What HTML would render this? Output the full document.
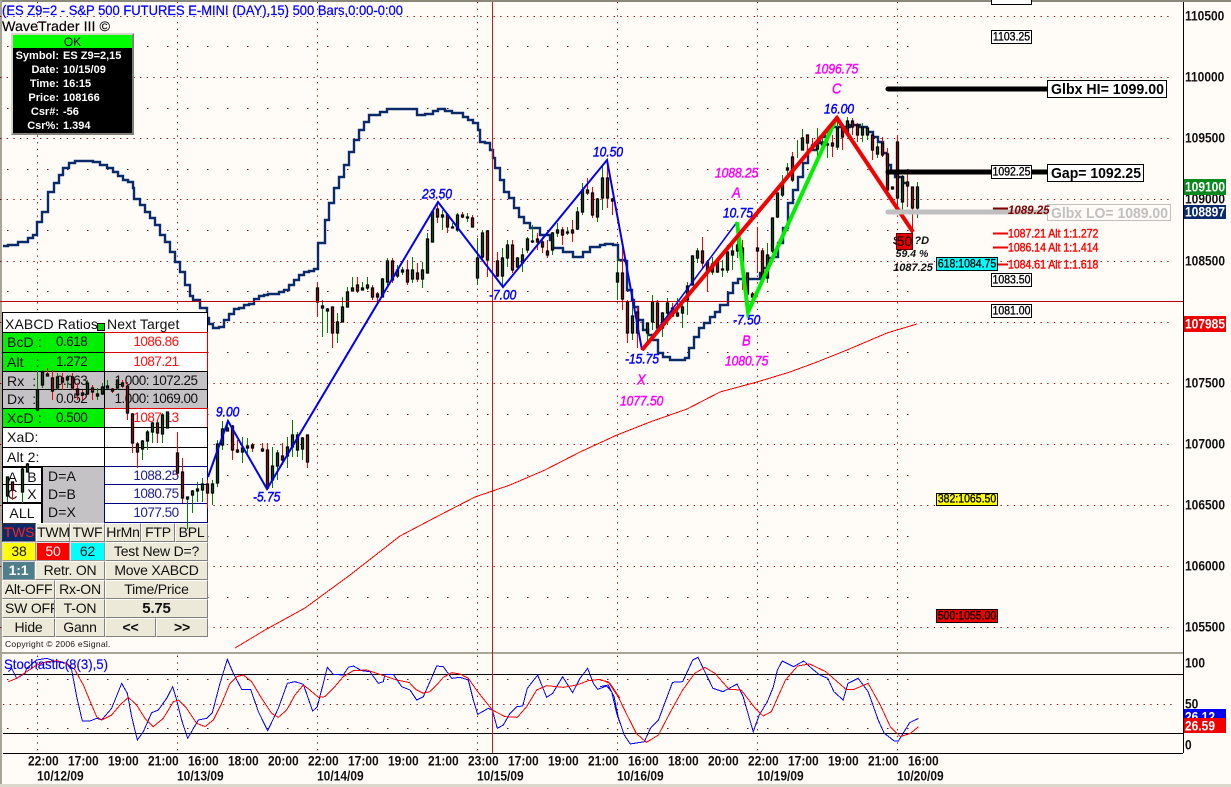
<!DOCTYPE html>
<html><head><meta charset="utf-8"><title>WaveTrader</title>
<style>
html,body{margin:0;padding:0;background:#fffcf8;width:1231px;height:787px;overflow:hidden}
svg{position:absolute;left:0;top:0}
text{font-family:"Liberation Sans",sans-serif}
.ax,.pt,.sm,.rd{transform-box:fill-box;transform-origin:0 100%;transform:scaleY(1.16)}
.ax{font-size:12px;font-weight:bold;fill:#101010}
.w{fill:#fff}
.pt{font-size:12px;font-style:italic;stroke-width:.4;text-anchor:middle}
.bl{fill:#0000ff;stroke:#0000ff}
.mg{fill:#ff00ff;stroke:#ff00ff}
.sm{font-size:10.5px;fill:#000;stroke:#000;stroke-width:.3;text-anchor:middle}
.rd{font-size:10.5px;fill:#ff0000;stroke:#ff0000;stroke-width:.35}
.ct{position:absolute;box-sizing:border-box;font:13.5px/18px "Liberation Sans",sans-serif;letter-spacing:-.5px;color:#101010;white-space:nowrap;overflow:hidden}
.l{letter-spacing:.1px;font-size:14px}
.b{background:#ece9d8;border:1px solid;border-color:#fff #808080 #808080 #fff;text-align:center;height:19px;letter-spacing:-.2px;font-size:14px;line-height:17px}
.ib{position:absolute;left:13px;width:119px;color:#fff;font:bold 11px/14px "Liberation Sans",sans-serif;white-space:nowrap}
.ib b{display:inline-block;width:46px;text-align:right;margin-right:4px}
</style></head><body>

<svg width="1231" height="787" viewBox="0 0 1231 787" style="z-index:1">
<rect x="0" y="0" width="1231" height="2" fill="#8a8878"/>
<rect x="0" y="0" width="2" height="787" fill="#a8a498"/>
<rect x="0" y="784" width="1231" height="3" fill="#dcd8cc"/>
<g fill="none" stroke="#900000" stroke-dasharray="1.3 5.37">
<path d="M0 16.500H1173M0 77.500H1173M0 138.500H1173M0 199.500H1173M0 261.500H1173M0 322.500H1173M0 383.500H1173M0 444.500H1173M0 505.500H1173M0 566.500H1173M0 627.500H1173M3 704.500H1173"/>
<path d="M37.500 2V753M177.500 2V753M317.500 2V753M477.500 2V753M617.500 2V753M757.500 2V753M897.500 2V753"/>
</g>
<path d="M7 46.500H917M7 108.500H917M7 169.500H917M7 230.500H917M7 291.500H917M7 352.500H917M7 414.500H917M7 475.500H917M7 536.500H917M7 597.500H917M7 679.500H917M7 728.500H917" fill="none" stroke="#700000" stroke-dasharray="1.500 18.500"/>

<path fill="none" stroke="#0a2a6a" stroke-width="2.400" d="M3 246H8V245H18V242H28V238H33V235H37V222H42V212H48V192H54V183H59V175H63V168H69V163H75V161H93V162H100V165H107V168H113V172H118V176H123V180H128V182H133V188H134V199H140V205H145V212H150V218H155V225H160V235H165V242H170V252H175V262H180V272H185V285H190V296H193V300H200V308H207V318H209V324H213V328H219V327H224V320H229V314H234V309H239V308H244V305H249V304H254V299H259V296H264V295H268V294H279V292H284V290H289V285H294V280H299V275H304V272H309V271H314V269H318V243H325V220H329V203H334V188H339V177H344V165H349V152H354V140H359V130H364V122H369V115H380V112H387V109H417V115H425V114H433V111H438V109H445V111H452V113H463V117H468V120H473V123H478V130H480V142H485V143H490V150H493V158H495V168H500V180H504V192H509V198H514V208H519V217H524V223H530V228H540V235H550V240H553V248H563V252H573V257H583V252H590V247H600V245H605V244H613V245H618V260H625V261H627V290H632V300H634V307H638V320H643V330H648V335H653V340H658V353H663V357H670V360H685V358H689V348H694V337H699V328H704V323H710V317H715V312H720V305H728V293H733V283H738V279H760V273H763V268H768V258H773V257H778V243H783V228H788V203H793V190H798V177H803V163H808V150H817V143H820V137H825V132H830V127H850V125H860V127H867V132H873V137H878V142H883V153H887V165H891V172H895V177H903V183H908V186"/>

<polyline fill="none" stroke="#ff0000" stroke-width="1" shape-rendering="crispEdges" points="235,648 265,630 305,608 350,575 400,536 440,515 475,497 510,485 545,470 580,452 617,435 650,422 687,409 720,392 757,382 790,372 817,362 847,350 887,333 917,324"/>

<path d="M3 674.500H1183M3 733.500H1183M3 753.500H1183M1183.500 2V753" stroke="#000" fill="none"/>
<rect x="2" y="652" width="1181" height="2" fill="#a8a498"/>

<g transform="translate(0 640) scale(.33333)" fill="none" shape-rendering="crispEdges">
<polyline vector-effect="non-scaling-stroke" stroke="#0000ff" stroke-width="1" points="25,95 35,85 50,115 75,100 80,85 110,60 140,55 170,65 200,70 215,90 230,170 247,243 270,243 290,235 305,240 335,205 365,130 382,160 395,230 412,300 430,275 455,218 475,210 500,175 518,140 530,180 545,240 563,295 595,240 620,235 637,218 660,130 682,58 700,100 725,148 752,148 775,215 803,272 835,205 862,130 885,125 910,133 938,213 952,200 982,82 1000,103 1030,105 1045,82 1060,78 1085,92 1110,95 1135,130 1150,125 1155,103 1180,103 1205,140 1230,150"/>
<polyline vector-effect="non-scaling-stroke" stroke="#ff0000" stroke-width="1" points="25,125 50,115 80,95 110,75 140,65 170,62 200,70 225,90 250,135 275,195 290,230 305,240 335,225 360,195 385,172 410,195 435,235 460,260 490,235 520,185 535,180 560,205 590,250 615,260 640,240 665,190 690,130 710,110 730,105 755,125 785,175 815,220 835,232 860,210 885,165 910,135 930,150 955,172 975,170 1000,145 1030,110 1060,92 1100,90 1130,100 1160,110 1190,120 1230,128"/>
</g>
<g transform="translate(410 650) scale(.33333)" fill="none" shape-rendering="crispEdges">
<polyline vector-effect="non-scaling-stroke" stroke="#0000ff" stroke-width="1" points="0,120 20,150 40,140 60,95 80,48 100,50 125,85 150,82 175,90 190,150 203,193 235,175 247,180 262,235 280,225 300,190 320,170 338,168 352,115 383,75 410,142 428,130 458,80 488,128 510,85 533,55 550,100 563,118 590,108 605,125 620,190 630,220"/>
<polyline vector-effect="non-scaling-stroke" stroke="#ff0000" stroke-width="1" points="0,100 20,120 40,130 60,125 80,105 100,82 125,68 150,72 175,85 203,125 247,180 285,200 322,202 350,170 380,120 410,107 460,112 500,105 535,92 570,88 600,100 630,145"/>
</g>
<g transform="translate(600 640) scale(.40323 .33333)" fill="none" shape-rendering="crispEdges">
<polyline vector-effect="non-scaling-stroke" stroke="#0000ff" stroke-width="1" points="0,140 20,135 35,170 45,230 60,285 75,312 110,305 125,265 145,240 165,175 180,127 205,125 230,60 243,52 260,95 280,145 305,155 340,132 355,170 380,275 395,225 415,185 430,140 440,90 452,63 480,80 505,63 525,85 545,105 565,115 580,155 603,180 615,130 640,115 665,155 690,240 705,280 730,303 740,303 768,248 790,235"/>
<polyline vector-effect="non-scaling-stroke" stroke="#ff0000" stroke-width="1" points="0,120 20,125 45,170 65,220 90,280 115,307 145,285 175,215 205,150 235,100 260,82 285,100 320,148 350,150 385,205 405,228 425,215 460,120 490,78 520,72 560,95 610,148 630,148 665,130 695,195 720,260 745,290 770,280 790,260"/>
</g>

<text x="2" y="15" font-size="14" fill="#0000ff" stroke="#0000ff" stroke-width=".25" textLength="401" lengthAdjust="spacingAndGlyphs">(ES Z9=2 - S&amp;P 500 FUTURES E-MINI (DAY),15) 500 Bars,0:00-0:00</text>
<text x="2" y="31" font-size="14" fill="#000" stroke="#000" stroke-width=".15" textLength="108" lengthAdjust="spacingAndGlyphs">WaveTrader III ©</text>

<text class="ax" x="1185" y="21">110500</text><text class="ax" x="1185" y="82">110000</text><text class="ax" x="1185" y="143">109500</text><text class="ax" x="1185" y="204">109000</text><text class="ax" x="1185" y="266">108500</text><text class="ax" x="1185" y="388">107500</text><text class="ax" x="1185" y="449">107000</text><text class="ax" x="1185" y="510">106500</text><text class="ax" x="1185" y="571">106000</text><text class="ax" x="1185" y="632">105500</text>
<rect x="1184" y="179" width="42" height="16" fill="#0a8a1e"/><text class="ax w" x="1185" y="192">109100</text>
<rect x="1184" y="205" width="42" height="14" fill="#0a2a6a"/><text class="ax w" x="1185" y="217">108897</text>
<rect x="1184" y="316" width="42" height="16" fill="#f00000"/><text class="ax w" x="1185" y="329">107985</text>
<text class="ax" x="1185" y="668">100</text><text class="ax" x="1185" y="709">50</text><text class="ax" x="1185" y="750">0</text>
<rect x="1184" y="709" width="42" height="12" fill="#0000f0"/><text class="ax w" x="1185" y="722">26.12</text>
<rect x="1184" y="718" width="42" height="15" fill="#f00000"/><text class="ax w" x="1185" y="731">26.59</text>

<text class="ax" x="28" y="766">22:00</text><text class="ax" x="68" y="766">17:00</text><text class="ax" x="108" y="766">19:00</text><text class="ax" x="148" y="766">21:00</text><text class="ax" x="188" y="766">16:00</text><text class="ax" x="228" y="766">18:00</text><text class="ax" x="268" y="766">20:00</text><text class="ax" x="308" y="766">22:00</text><text class="ax" x="348" y="766">17:00</text><text class="ax" x="388" y="766">19:00</text><text class="ax" x="428" y="766">21:00</text><text class="ax" x="468" y="766">23:00</text><text class="ax" x="508" y="766">17:00</text><text class="ax" x="548" y="766">19:00</text><text class="ax" x="588" y="766">21:00</text><text class="ax" x="628" y="766">16:00</text><text class="ax" x="668" y="766">18:00</text><text class="ax" x="708" y="766">20:00</text><text class="ax" x="748" y="766">22:00</text><text class="ax" x="788" y="766">17:00</text><text class="ax" x="828" y="766">19:00</text><text class="ax" x="868" y="766">21:00</text><text class="ax" x="908" y="766">16:00</text>
<text class="ax" x="37" y="781">10/12/09</text><text class="ax" x="177" y="781">10/13/09</text><text class="ax" x="317" y="781">10/14/09</text><text class="ax" x="477" y="781">10/15/09</text><text class="ax" x="617" y="781">10/16/09</text><text class="ax" x="757" y="781">10/19/09</text><text class="ax" x="897" y="781">10/20/09</text>
<text x="4" y="669" font-size="14" fill="#0000ff" stroke="#0000ff" stroke-width=".15" textLength="104" lengthAdjust="spacingAndGlyphs">Stochastic(8(3),5)</text>
</svg>

<div style="position:absolute;z-index:2;left:0;top:0;width:1231px;height:787px">
<div style="position:absolute;left:11px;top:33px;width:123px;height:102px;background:#000;border:2px solid;border-color:#d8d4c8 #808078 #808078 #d8d4c8;box-sizing:border-box"></div>
<div class="ct" style="left:13px;top:35px;width:119px;height:13px;background:#00ff00;text-align:center;font-size:12px;line-height:14px;letter-spacing:0;color:#000;">OK</div>
<div class="ib" style="top:49px"><b>Symbol:</b>ES Z9=2,15</div>
<div class="ib" style="top:63px"><b>Date:</b>10/15/09</div>
<div class="ib" style="top:77px"><b>Time:</b>16:15</div>
<div class="ib" style="top:91px"><b>Price:</b>108166</div>
<div class="ib" style="top:105px"><b>Csr#:</b>-56</div>
<div class="ib" style="top:119px"><b>Csr%:</b>1.394</div>

<div style="position:absolute;left:2px;top:312px;width:206px;height:211px;background:#fff;border:1px solid #000;border-bottom:0;box-sizing:border-box"></div>
<div class="ct l" style="left:5px;top:315px;width:92px">XABCD Ratios</div>
<div style="position:absolute;left:97px;top:323px;width:6px;height:6px;background:#00d000;border:1px solid #000"></div>
<div class="ct l" style="left:107px;top:315px;width:100px">Next Target</div>

<div class="ct" style="left:3px;top:332px;width:101px;height:20px;background:#00f000;border-top:1px solid #000;padding-left:4px"><span class="l">BcD :</span><span style="position:absolute;left:53px">0.618</span></div>
<div class="ct" style="left:3px;top:352px;width:101px;height:19px;background:#00f000;border-top:1px solid #000;padding-left:4px"><span class="l">Alt &nbsp; :</span><span style="position:absolute;left:53px">1.272</span></div>
<div class="ct" style="left:3px;top:371px;width:101px;height:18px;background:#c4c2c4;border-top:1px solid #000;padding-left:4px"><span class="l">Rx &nbsp;:</span><span style="position:absolute;left:53px">0.063</span></div>
<div class="ct" style="left:3px;top:389px;width:101px;height:19px;background:#c4c2c4;border-top:1px solid #000;padding-left:4px"><span class="l">Dx &nbsp;:</span><span style="position:absolute;left:53px">0.052</span></div>
<div class="ct" style="left:3px;top:408px;width:101px;height:19px;background:#00f000;border-top:1px solid #000;padding-left:4px"><span class="l">XcD :</span><span style="position:absolute;left:53px">0.500</span></div>
<div class="ct" style="left:3px;top:427px;width:101px;height:20px;border-top:1px solid #000;padding-left:4px"><span class="l">XaD:</span></div>
<div class="ct" style="left:3px;top:447px;width:101px;height:19px;border-top:1px solid #000;padding-left:4px"><span class="l">Alt 2:</span></div>

<div class="ct" style="left:104px;top:332px;width:104px;height:20px;border:1px solid #e00000;border-left-color:#000;border-bottom:0;text-align:center;color:#ff1010">1086.86</div>
<div class="ct" style="left:104px;top:352px;width:104px;height:19px;border:1px solid #e00000;border-left-color:#000;border-bottom:0;text-align:center;color:#ff1010">1087.21</div>
<div class="ct" style="left:104px;top:371px;width:104px;height:18px;border:1px solid #000;border-bottom:0;background:#c4c2c4;text-align:center;">1.000: 1072.25</div>
<div class="ct" style="left:104px;top:389px;width:104px;height:19px;border:1px solid #000;border-bottom:0;background:#c4c2c4;text-align:center;">1.000: 1069.00</div>
<div class="ct" style="left:104px;top:408px;width:104px;height:19px;border:1px solid #e00000;border-left-color:#000;border-bottom:0;text-align:center;color:#ff1010">1087.13</div>
<div class="ct" style="left:104px;top:427px;width:104px;height:20px;border:1px solid #000;border-bottom:0"></div>
<div class="ct" style="left:104px;top:447px;width:104px;height:19px;border:1px solid #000;border-bottom:0"></div>

<div class="ct l" style="left:3px;top:466px;width:20px;height:19px;border:1px solid #000;border-width:2px 1px 1px 0;text-align:center">A</div>
<div class="ct l" style="left:23px;top:466px;width:20px;height:19px;border:1px solid #000;border-width:2px 2px 1px 0;text-align:center">B</div>
<div class="ct l" style="left:3px;top:485px;width:20px;height:18px;border:1px solid #000;border-width:0 1px 1px 0;text-align:center">C</div>
<div class="ct l" style="left:23px;top:485px;width:20px;height:18px;border:1px solid #000;border-width:0 2px 1px 0;text-align:center">X</div>
<div class="ct l" style="left:3px;top:503px;width:40px;height:20px;border:1px solid #000;border-width:1px 2px 0 0;text-align:center">ALL</div>
<div class="ct l" style="left:43px;top:466px;width:61px;height:19px;background:#c4c2c4;border-top:1px solid #000;padding-left:5px">D=A</div>
<div class="ct l" style="left:43px;top:485px;width:61px;height:18px;background:#c4c2c4;padding-left:5px">D=B</div>
<div class="ct l" style="left:43px;top:503px;width:61px;height:20px;background:#c4c2c4;padding-left:5px">D=X</div>
<div class="ct" style="left:104px;top:466px;width:104px;height:19px;border:1px solid #000080;border-bottom:0;text-align:center;color:#20208c">1088.25</div>
<div class="ct" style="left:104px;top:484px;width:104px;height:19px;border:1px solid #000080;border-bottom:0;text-align:center;color:#20208c">1080.75</div>
<div class="ct" style="left:104px;top:503px;width:104px;height:20px;border:1px solid #000080;text-align:center;color:#20208c">1077.50</div>

<div style="position:absolute;left:2px;top:523px;width:206px;height:114px;background:#d8d4c8"></div>
<div class="ct b" style="left:2px;top:523px;width:34px;background:#0a2a6a;color:#ff2020;border-color:#333 #888 #888 #333">TWS</div>
<div class="ct b" style="left:36px;top:523px;width:34px">TWM</div>
<div class="ct b" style="left:70px;top:523px;width:35px">TWF</div>
<div class="ct b" style="left:105px;top:523px;width:36px">HrMn</div>
<div class="ct b" style="left:141px;top:523px;width:34px">FTP</div>
<div class="ct b" style="left:175px;top:523px;width:33px">BPL</div>
<div class="ct b" style="left:2px;top:542px;width:34px;background:#ffff00;border-color:#ddd #999 #999 #ddd">38</div>
<div class="ct b" style="left:36px;top:542px;width:34px;background:#ff0000;color:#fff;border-color:#ddd #999 #999 #ddd">50</div>
<div class="ct b" style="left:70px;top:542px;width:35px;background:#00ffff;border-color:#ddd #999 #999 #ddd">62</div>
<div class="ct b" style="left:105px;top:542px;width:103px">Test New D=?</div>
<div class="ct b" style="left:2px;top:561px;width:33px;background:#4f7f8a;color:#fff;font-weight:bold;border-color:#ddd #999 #999 #ddd">1:1</div>
<div class="ct b" style="left:35px;top:561px;width:70px">Retr. ON</div>
<div class="ct b" style="left:105px;top:561px;width:103px">Move XABCD</div>
<div class="ct b" style="left:2px;top:580px;width:53px">Alt-OFF</div>
<div class="ct b" style="left:55px;top:580px;width:50px">Rx-ON</div>
<div class="ct b" style="left:105px;top:580px;width:103px">Time/Price</div>
<div class="ct b" style="left:2px;top:599px;width:53px;text-align:left;padding-left:2px">SW OFF</div>
<div class="ct b" style="left:55px;top:599px;width:50px">T-ON</div>
<div class="ct b" style="left:105px;top:599px;width:103px;font-weight:bold;font-size:15px">5.75</div>
<div class="ct b" style="left:2px;top:618px;width:53px">Hide</div>
<div class="ct b" style="left:55px;top:618px;width:50px">Gann</div>
<div class="ct b" style="left:105px;top:618px;width:51px;font-weight:bold">&lt;&lt;</div>
<div class="ct b" style="left:156px;top:618px;width:52px;font-weight:bold">&gt;&gt;</div>
<div class="ct" style="left:2px;top:637px;width:206px;height:15px;background:#fffcf8;font-size:8.5px;line-height:14px;padding-left:3px;letter-spacing:.25px">Copyright © 2006 eSignal.</div>
</div>

<svg width="1231" height="787" viewBox="0 0 1231 787" style="z-index:3">
<path fill="none" stroke="#008000" d="M7.5 477V502M22.5 469V503M27.5 463V472M37.5 370V412M42.5 370V388M57.5 373V390M67.500 375V388M87.500 380V395M97.500 388V400M102.500 383V395M107.500 380V388M117.500 380V390M142.500 440V460M147.500 430V450M152.500 422V443M162.500 413V443M167.500 412V428M187.500 498V529M192.500 490V513M197.500 482V502M202.500 478V502M212.500 480V505M217.500 440V487M222.500 421V450M227.500 420V430M242.500 437V463M247.500 438V453M272.500 447V488M277.500 450V480M287.500 437V468M292.500 420V457M297.500 432V457M302.500 437V460M322.500 300V337M327.500 308V333M337.500 313V343M342.500 297V322M347.500 287V307M352.500 277V290M362.500 282V290M367.500 277V290M382.500 278V297M387.500 258V287M397.500 265V278M402.500 267V275M412.500 257V283M422.500 262V288M427.500 233V273M432.500 210V242M442.500 210V230M452.500 223V228M457.500 213V232M467.500 213V222M477.500 238V285M482.500 230V260M502.500 248V287M507.500 240V267M517.500 257V268M522.500 248V272M527.500 237V253M532.500 225V243M552.500 232V255M557.500 223V237M567.500 227V235M577.500 207V230M582.500 183V215M597.500 198V222M602.500 165V210M617.500 258V300M632.500 292V340M647.500 322V343M652.500 295V330M662.500 312V337M667.500 298V325M677.500 298V317M682.500 303V328M687.500 282V315M692.500 255V285M697.500 248V263M712.500 257V275M722.500 260V277M727.500 245V273M732.500 240V270M737.500 238V258M767.500 243V283M772.500 218V253M777.500 193V218M782.500 175V197M787.500 163V178M797.500 140V158M802.500 129V150M817.500 128V157M822.500 133V150M827.500 138V158M837.500 117V150M847.500 117V137M862.500 123V142M867.500 127V140M877.500 143V158M902.500 175V217M917.500 182V218"/>
<path fill="none" stroke="#ff0000" d="M12.500 482V500M47.500 368V376M52.500 370V400M62.500 373V390M72.500 373V390M77.500 383V400M82.500 390V400M92.500 385V400M112.500 388V393M122.500 380V388M127.500 382V420M132.500 413V453M137.500 442V468M157.500 420V443M177.500 432V477M182.500 458V503M207.500 480V508M232.500 425V460M237.500 440V453M252.500 443V452M262.500 443V452M267.500 443V490M282.500 443V465M307.500 435V468M317.500 282V317M332.500 307V348M357.500 277V293M372.500 285V300M377.500 292V302M392.500 258V283M407.500 260V285M417.500 263V282M437.500 202V223M447.500 213V233M462.500 212V218M472.500 215V227M487.500 230V277M497.500 252V277M512.500 240V273M537.500 233V250M542.500 237V253M547.500 240V258M562.500 227V245M572.500 220V242M587.500 178V195M592.500 187V218M607.500 160V208M612.500 198V215M622.500 248V310M627.500 300V343M637.500 307V348M657.500 300V330M672.500 303V317M702.500 237V268M707.500 260V292M717.500 258V273M742.500 240V290M747.500 273V313M752.500 292V305M757.500 227V273M762.500 248V278M792.500 152V182M807.500 135V153M812.500 138V150M832.500 135V157M842.500 127V150M852.500 118V135M857.500 123V142M872.500 135V160M882.500 137V157M887.500 148V190M892.500 187V189M897.500 135V212M907.500 173V207M912.500 187V233"/>
<path fill="#007000" stroke="#000" stroke-width="1.3" d="M6.500 477h2v19h-2zM21.500 469h2v23h-2zM26.500 464h2v8h-2zM36.500 390h2v20h-2zM41.500 372h2v13h-2zM56.500 377h2v11h-2zM66.500 377h2v3h-2zM86.500 383h2v11h-2zM96.500 394h2v2h-2zM101.500 387h2v7h-2zM106.500 386h2v2h-2zM116.500 380h2v8h-2zM141.500 441h2v8h-2zM146.500 432h2v9h-2zM151.500 423h2v9h-2zM161.500 415h2v19h-2zM166.500 412h2v16h-2zM186.500 497h2v2h-2zM191.500 491h2v4h-2zM196.500 489h2v2h-2zM201.500 484h2v6h-2zM211.500 484h2v9h-2zM216.500 444h2v39h-2zM221.500 429h2v16h-2zM226.500 428h2v3h-2zM241.500 448h2v4h-2zM246.500 446h2v2h-2zM271.500 466h2v14h-2zM276.500 453h2v13h-2zM286.500 447h2v9h-2zM291.500 435h2v12h-2zM296.500 435h2v15h-2zM301.500 438h2v11h-2zM321.500 306h2v2h-2zM326.500 309h2v2h-2zM336.500 322h2v11h-2zM341.500 307h2v15h-2zM346.500 292h2v15h-2zM351.500 288h2v3h-2zM361.500 288h2v2h-2zM366.500 285h2v3h-2zM381.500 279h2v18h-2zM386.500 261h2v21h-2zM396.500 270h2v6h-2zM401.500 270h2v2h-2zM411.500 270h2v9h-2zM421.500 270h2v9h-2zM426.500 239h2v34h-2zM431.500 212h2v30h-2zM441.500 215h2v2h-2zM451.500 227h2v1h-2zM456.500 215h2v15h-2zM466.500 217h2v1h-2zM476.500 258h2v20h-2zM481.500 233h2v24h-2zM501.500 258h2v18h-2zM506.500 245h2v13h-2zM516.500 258h2v9h-2zM521.500 255h2v8h-2zM526.500 239h2v11h-2zM531.500 241h2v1h-2zM551.500 233h2v17h-2zM556.500 230h2v3h-2zM566.500 232h2v1h-2zM576.500 212h2v17h-2zM581.500 190h2v22h-2zM596.500 199h2v18h-2zM601.500 178h2v20h-2zM616.500 273h2v9h-2zM631.500 316h2v17h-2zM646.500 323h2v10h-2zM651.500 302h2v20h-2zM661.500 313h2v15h-2zM666.500 303h2v10h-2zM676.500 313h2v3h-2zM681.500 307h2v6h-2zM686.500 286h2v14h-2zM691.500 256h2v29h-2zM696.500 251h2v7h-2zM711.500 264h2v8h-2zM721.500 269h2v1h-2zM726.500 252h2v18h-2zM731.500 251h2v4h-2zM736.500 245h2v6h-2zM766.500 255h2v23h-2zM771.500 218h2v33h-2zM776.500 193h2v24h-2zM781.500 183h2v12h-2zM786.500 168h2v2h-2zM801.500 138h2v12h-2zM816.500 145h2v4h-2zM821.500 142h2v3h-2zM826.500 144h2v1h-2zM836.500 128h2v19h-2zM846.500 121h2v13h-2zM861.500 127h2v8h-2zM866.500 128h2v7h-2zM876.500 147h2v7h-2zM901.500 177h2v25h-2zM916.500 187h2v21h-2z"/>
<path fill="#e00000" stroke="#000" stroke-width="1.3" d="M11.500 482h2v8h-2zM46.500 374h2v2h-2zM51.500 378h2v13h-2zM61.500 378h2v4h-2zM71.500 377h2v11h-2zM76.500 389h2v6h-2zM81.500 393h2v2h-2zM91.500 388h2v4h-2zM111.500 389h2v2h-2zM121.500 383h2v3h-2zM126.500 386h2v27h-2zM131.500 414h2v29h-2zM136.500 444h2v8h-2zM156.500 423h2v10h-2zM176.500 453h2v20h-2zM181.500 472h2v26h-2zM206.500 484h2v9h-2zM231.500 426h2v24h-2zM236.500 450h2v2h-2zM251.500 445h2v3h-2zM261.500 449h2v2h-2zM266.500 450h2v38h-2zM281.500 456h2v4h-2zM306.500 435h2v27h-2zM316.500 288h2v14h-2zM331.500 307h2v26h-2zM356.500 285h2v6h-2zM371.500 288h2v9h-2zM376.500 294h2v3h-2zM391.500 261h2v19h-2zM406.500 270h2v12h-2zM416.500 273h2v6h-2zM436.500 209h2v8h-2zM446.500 215h2v12h-2zM461.500 215h2v2h-2zM471.500 218h2v9h-2zM486.500 231h2v29h-2zM496.500 261h2v15h-2zM511.500 245h2v25h-2zM536.500 239h2v3h-2zM541.500 242h2v5h-2zM546.500 251h2v4h-2zM561.500 230h2v5h-2zM571.500 230h2v3h-2zM586.500 190h2v3h-2zM591.500 193h2v22h-2zM606.500 178h2v20h-2zM611.500 199h2v2h-2zM621.500 273h2v26h-2zM626.500 302h2v31h-2zM636.500 312h2v21h-2zM656.500 303h2v25h-2zM671.500 308h2v8h-2zM701.500 251h2v12h-2zM706.500 262h2v10h-2zM716.500 261h2v11h-2zM741.500 248h2v21h-2zM746.500 273h2v21h-2zM751.500 294h2v3h-2zM756.500 248h2v3h-2zM761.500 251h2v27h-2zM791.500 157h2v23h-2zM806.500 135h2v8h-2zM811.500 145h2v4h-2zM831.500 143h2v3h-2zM841.500 128h2v9h-2zM851.500 121h2v6h-2zM856.500 125h2v10h-2zM871.500 135h2v15h-2zM881.500 143h2v12h-2zM886.500 154h2v36h-2zM891.500 187h2v2h-2zM896.500 142h2v56h-2zM906.500 182h2v4h-2zM911.500 187h2v21h-2z"/>

<path d="M0 301.500H1183" stroke="#c00000" fill="none"/>
<path d="M492.500 2V753" stroke="#e01010" stroke-width="1" fill="none"/>

<path d="M208 477L228 421L267 489L438 202L503 287L607 160L642 350" fill="none" stroke="#0000f0" stroke-width="2"/>
<path d="M642 350L737 222" fill="none" stroke="#0000f0" stroke-width="1.500"/>
<path d="M737 222L748 312L837 117" fill="none" stroke="#00f000" stroke-width="4"/>
<path d="M642 350L837 118L913 232" fill="none" stroke="#f00000" stroke-width="4"/>

<path d="M888 89H1047M888 172H1047" stroke="#000" stroke-width="5" stroke-linecap="round"/>
<path d="M888 212H1047" stroke="#c0c0c0" stroke-width="5" stroke-linecap="round"/>
<path d="M993 208.500H1008" stroke="#800000" stroke-width="2"/>
<path d="M993 233.500H1008M993 247.500H1008M993 264.500H1008" stroke="#f00000" stroke-width="2"/>

<rect x="1047.500" y="80.500" width="119" height="17" fill="#fff" stroke="#000"/><text x="1051" y="94" font-size="15" font-weight="bold" fill="#000" textLength="113" lengthAdjust="spacingAndGlyphs">Glbx HI= 1099.00</text>
<rect x="1047.500" y="164.500" width="96" height="17" fill="#fff" stroke="#000"/><text x="1051" y="178" font-size="15" font-weight="bold" fill="#000" textLength="90" lengthAdjust="spacingAndGlyphs">Gap= 1092.25</text>
<rect x="1047.500" y="204.500" width="123" height="16" fill="#fffcf8" stroke="#c0c0c0"/><text x="1051" y="218" font-size="15" font-weight="bold" fill="#c0c0c0" textLength="117" lengthAdjust="spacingAndGlyphs">Glbx LO= 1089.00</text>

<rect x="991.500" y="-5.500" width="40" height="10" fill="#fff" stroke="#000"/>
<rect x="991.500" y="30.500" width="40" height="13" fill="#fff" stroke="#000"/><text class="sm" x="1011.500" y="41">1103.25</text>
<rect x="991.500" y="165.500" width="40" height="13" fill="#fff" stroke="#000"/><text class="sm" x="1011.500" y="176">1092.25</text>
<rect x="991.500" y="273.500" width="40" height="13" fill="#fff" stroke="#000"/><text class="sm" x="1011.500" y="284">1083.50</text>
<rect x="991.500" y="304.500" width="40" height="13" fill="#fff" stroke="#000"/><text class="sm" x="1011.500" y="315">1081.00</text>
<rect x="936.500" y="257.500" width="61" height="13" fill="#00ffff" stroke="#000"/><text class="sm" x="967" y="268">618:1084.75</text>
<rect x="936.500" y="493.500" width="61" height="12" fill="#ffff00" stroke="#000"/><text class="sm" x="967" y="503">382:1065.50</text>
<rect x="936.500" y="609.500" width="61" height="13" fill="#f00000" stroke="#000"/><text class="sm" x="967" y="620">500:1055.00</text>

<text x="1008" y="214" font-size="11.500" font-weight="bold" font-style="italic" fill="#800000">1089.25</text>
<text class="rd" x="1008" y="238">1087.21 Alt 1:1.272</text>
<text class="rd" x="1008" y="252">1086.14 Alt 1:1.414</text>
<text class="rd" x="1008" y="269">1084.61 Alt 1:1.618</text>

<text x="893" y="244" font-size="11" font-weight="bold" font-style="italic" fill="#101010">$50 ?D</text>
<rect x="896.500" y="233.500" width="16" height="16" fill="#e80000" stroke="#600000"/>
<text x="904.500" y="246" font-size="14" fill="#000" text-anchor="middle">50</text>
<text x="912" y="257" font-size="10.5" font-weight="bold" font-style="italic" fill="#101010" text-anchor="middle">59.4 %</text>
<text x="913" y="271" font-size="11" font-weight="bold" font-style="italic" fill="#101010" text-anchor="middle">1087.25</text>

<g style="text-anchor:middle">
<text class="pt mg" x="815" y="74" style="text-anchor:start">1096.75</text><text class="pt mg" x="832" y="94" style="text-anchor:start;font-size:13px">C</text><text class="pt bl" x="824" y="114" style="text-anchor:start">16.00</text>
<text class="pt mg" x="715" y="178" style="text-anchor:start">1088.25</text><text class="pt mg" x="732" y="198" style="text-anchor:start;font-size:13px">A</text><text class="pt bl" x="723" y="218" style="text-anchor:start">10.75</text>
<text class="pt bl" x="733" y="325" style="text-anchor:start">-7.50</text><text class="pt mg" x="742" y="346" style="text-anchor:start;font-size:13px">B</text><text class="pt mg" x="725" y="366" style="text-anchor:start">1080.75</text>
<text class="pt bl" x="625" y="364" style="text-anchor:start">-15.75</text><text class="pt mg" x="637" y="385" style="text-anchor:start;font-size:13px">X</text><text class="pt mg" x="620" y="406" style="text-anchor:start">1077.50</text>
<text class="pt bl" x="422" y="199" style="text-anchor:start">23.50</text><text class="pt bl" x="489" y="300" style="text-anchor:start">-7.00</text><text class="pt bl" x="593" y="157" style="text-anchor:start">10.50</text><text class="pt bl" x="216" y="417" style="text-anchor:start">9.00</text><text class="pt bl" x="253" y="502" style="text-anchor:start">-5.75</text>
</g>
</svg>
</body></html>
